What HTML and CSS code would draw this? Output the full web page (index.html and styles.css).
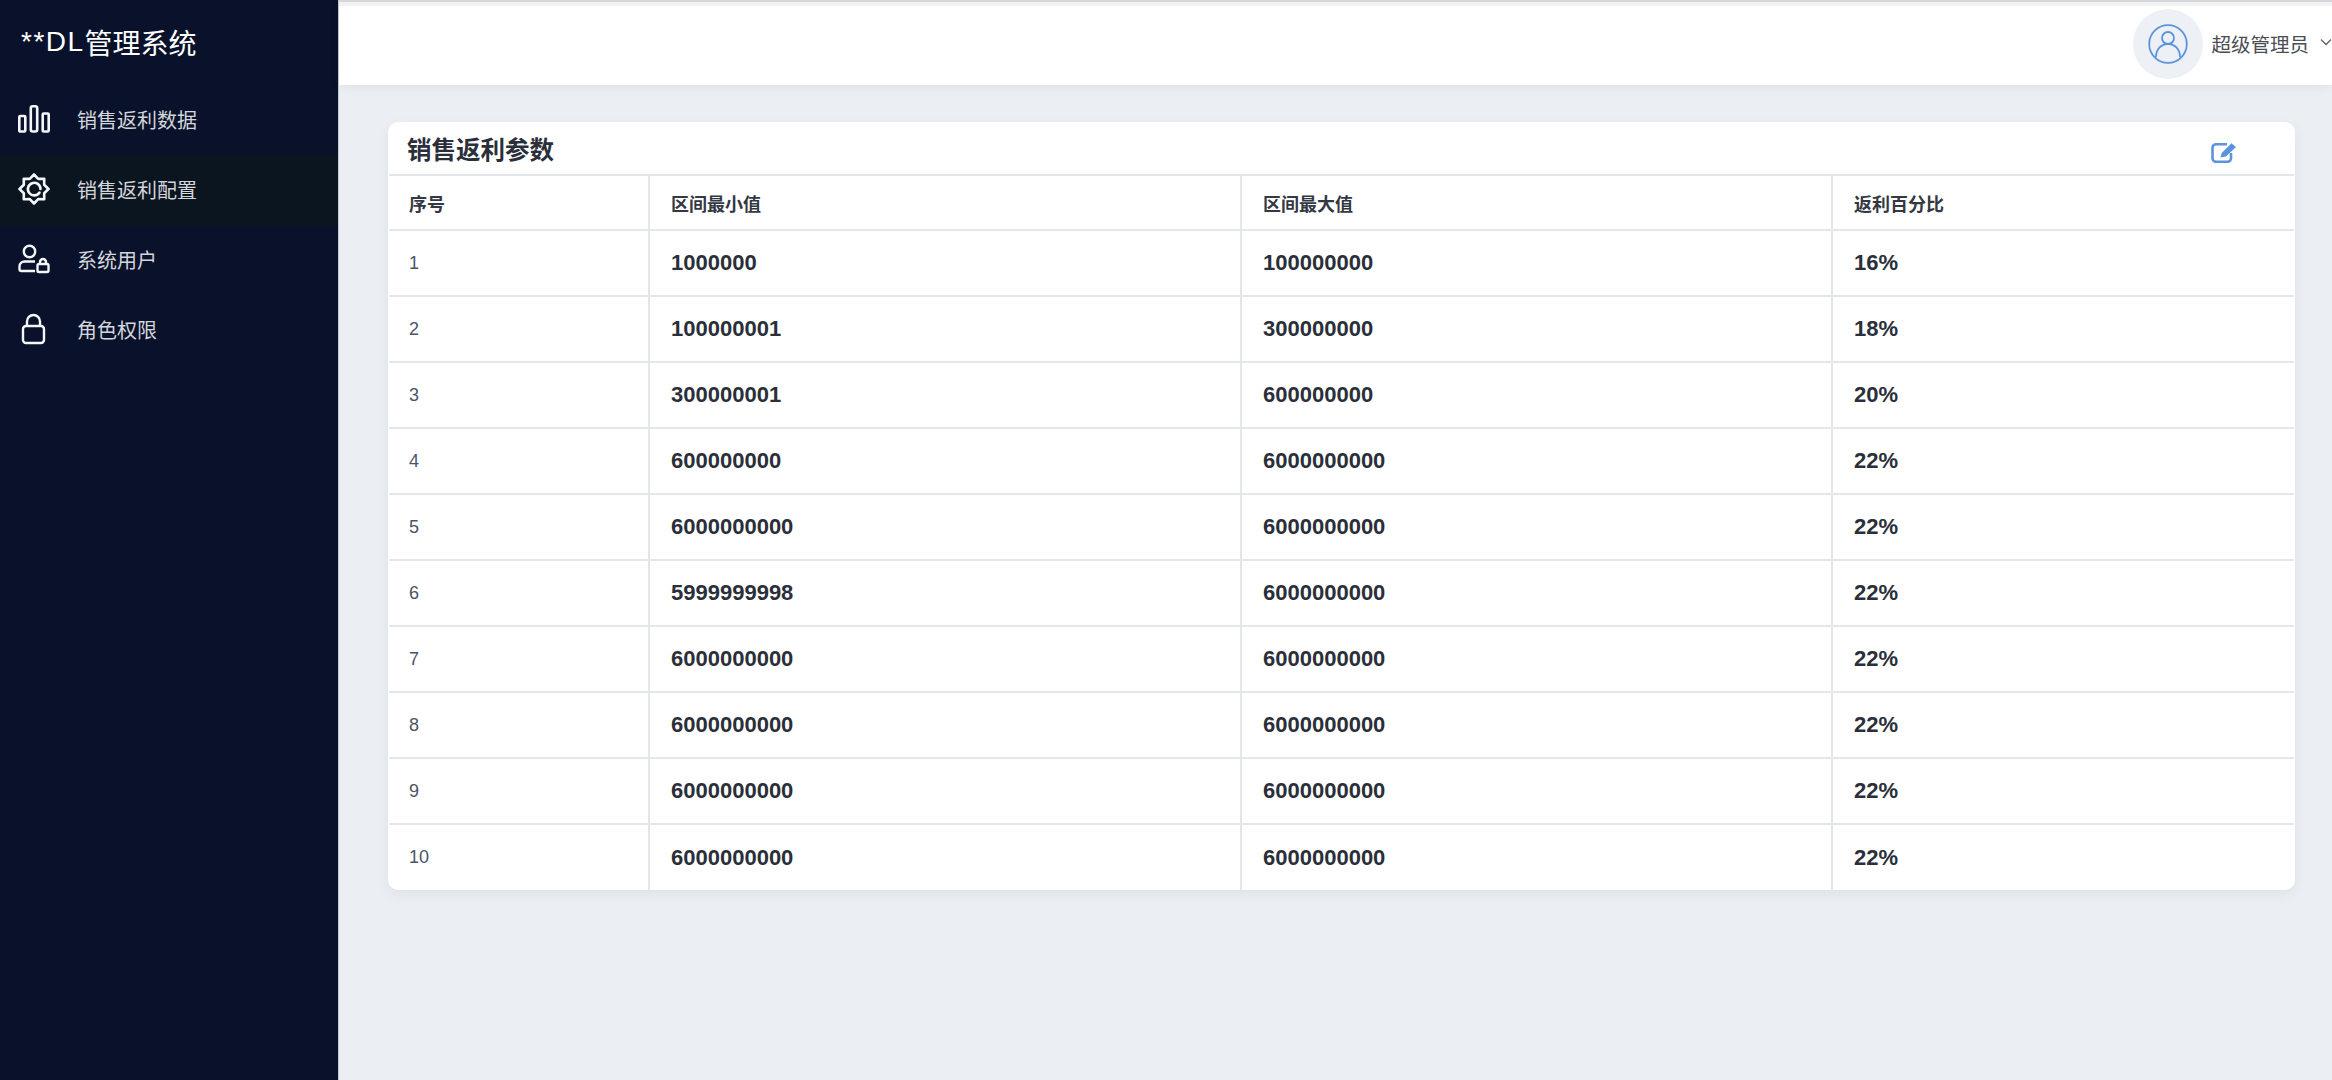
FILE: index.html
```html
<!DOCTYPE html>
<html lang="zh">
<head>
<meta charset="utf-8">
<title>**DL管理系统</title>
<link rel="stylesheet" href="styles.css">
</head>
<body>
<div class="app">
  <aside class="sidebar">
    <div class="logo"><span class="logo-mark">**DL</span>管理系统</div>
    <nav class="menu">
      <a class="menu-item">
        <svg class="menu-icon" viewBox="0 0 32 28" fill="none" stroke="currentColor" stroke-width="2.6"><rect x="1.300" y="11" width="6" height="15.500" rx="1"/><rect x="12.800" y="1.300" width="6.400" height="25.200" rx="2"/><rect x="24.700" y="8.500" width="6" height="18" rx="1"/></svg>
        <span>销售返利数据</span>
      </a>
      <a class="menu-item active">
        <svg class="menu-icon" viewBox="0 0 32 32" fill="none" stroke="currentColor" stroke-width="2.600" stroke-linejoin="round" stroke-linecap="round"><path d="M16 1.500L20.210 5.840 26.250 5.750 26.160 11.790 30.500 16 26.160 20.210 26.250 26.250 20.210 26.160 16 30.500 11.790 26.160 5.750 26.250 5.840 20.210 1.500 16 5.840 11.790 5.750 5.750 11.790 5.840z"/><path d="M21.500 19.500a6.300 6.300 0 1 1 1-3.500"/></svg>
        <span>销售返利配置</span>
      </a>
      <a class="menu-item">
        <svg class="menu-icon" viewBox="0 0 32 30" fill="none" stroke="currentColor" stroke-width="2.400"><circle cx="11.500" cy="7.500" r="5.700"/><path d="M17 17.500H6.500a5 5 0 0 0-5 5v2.500a2 2 0 0 0 2 2H17"/><rect x="19.500" y="20" width="11" height="8" rx="1.500"/><path d="M22 20v-2a3 3 0 0 1 6 0v2"/></svg>
        <span>系统用户</span>
      </a>
      <a class="menu-item">
        <svg class="menu-icon lock" viewBox="0 0 26 32" fill="none" stroke="currentColor" stroke-width="2.400"><rect x="2" y="13" width="21" height="17" rx="3"/><path d="M6 13V8.500a6.500 6.500 0 0 1 13 0V13"/></svg>
        <span>角色权限</span>
      </a>
    </nav>
  </aside>
  <div class="main">
    <header class="topbar">
      <div class="avatar">
        <svg viewBox="0 0 40 40" fill="none" stroke="#5b94dc" stroke-width="1.800"><circle cx="20" cy="20" r="18.800"/><circle cx="20" cy="14" r="6"/><path d="M8 33c0-7.500 5-13 12-13s12 5.500 12 13"/></svg>
      </div>
      <span class="username">超级管理员</span>
      <svg class="caret" viewBox="0 0 12 8" fill="none" stroke="#606266" stroke-width="1.300"><path d="M1 1.500l5 5 5-5"/></svg>
    </header>
    <main class="content">
      <section class="card">
        <div class="card-head">
          <h2>销售返利参数</h2>
          <svg class="edit" viewBox="0 0 26 21" fill="none"><path d="M16 2.200H5a3.500 3.500 0 0 0-3.500 3.500v10.600a3.500 3.500 0 0 0 3.500 3.500h11.500a3.500 3.500 0 0 0 3.500-3.500V11" stroke="#5b94dc" stroke-width="2.600"/><path d="M9.500 15.500l1.200-4.500L20.500 1.200 25 5 15 14.500z" fill="#5b94dc"/></svg>
        </div>
        <table class="grid">
          <colgroup><col class="c1"><col class="c2"><col class="c3"><col></colgroup>
          <thead><tr><th>序号</th><th>区间最小值</th><th>区间最大值</th><th>返利百分比</th></tr></thead>
          <tbody>
            <tr><td>1</td><td>1000000</td><td>100000000</td><td>16%</td></tr>
            <tr><td>2</td><td>100000001</td><td>300000000</td><td>18%</td></tr>
            <tr><td>3</td><td>300000001</td><td>600000000</td><td>20%</td></tr>
            <tr><td>4</td><td>600000000</td><td>6000000000</td><td>22%</td></tr>
            <tr><td>5</td><td>6000000000</td><td>6000000000</td><td>22%</td></tr>
            <tr><td>6</td><td>5999999998</td><td>6000000000</td><td>22%</td></tr>
            <tr><td>7</td><td>6000000000</td><td>6000000000</td><td>22%</td></tr>
            <tr><td>8</td><td>6000000000</td><td>6000000000</td><td>22%</td></tr>
            <tr><td>9</td><td>6000000000</td><td>6000000000</td><td>22%</td></tr>
            <tr><td>10</td><td>6000000000</td><td>6000000000</td><td>22%</td></tr>
          </tbody>
        </table>
      </section>
    </main>
  </div>
</div>
</body>
</html>
```

FILE: styles.css
```css
* { box-sizing: border-box; }
html, body { margin: 0; height: 100%; overflow: hidden; }
body { font-family: "Liberation Sans", "Noto Sans CJK SC", sans-serif; background: #ebeef2; color: #2a2f3a; }

.app { display: flex; height: 1080px; }

.sidebar { flex: 0 0 339px; background: #09122a; color: #fff; border-right: 1px solid #c4c7cc; }
.logo { height: 84px; padding-left: 21px; display: flex; align-items: center; font-size: 28px; color: #fff; }
.logo-mark { letter-spacing: 1.500px; }
.menu { display: flex; flex-direction: column; }
.menu-item { height: 70px; display: flex; align-items: center; padding-left: 18px; font-size: 20px; color: #d3d6dc; }
.menu-item.active { height: 72px; padding-bottom: 2px; margin-bottom: -2px; background: #0b1520; }
.menu-icon { width: 32px; height: 32px; flex: none; margin-right: 27px; color: #f4f6fa; }
.menu-icon.lock { padding: 0 3px; }

.main { flex: 1; min-width: 0; display: flex; flex-direction: column; }
.topbar { height: 85px; background: #fff; display: flex; align-items: center; justify-content: flex-end; border-top: 2px solid #d4d6d9; box-shadow: inset 0 4px 0 #f0f2f4, 0 2px 12px rgba(0,0,0,.06); }
.avatar { width: 70px; height: 70px; border-radius: 50%; background: #edf0f4; display: flex; align-items: center; justify-content: center; margin-right: 8px; }
.avatar svg { width: 40px; height: 40px; }
.username { font-size: 19.500px; color: #4a4d52; margin-right: 11px; }
.caret { width: 12px; height: 8px; margin-bottom: 4px; flex: none; }

.content { flex: 1; padding: 37px 37px 0 49px; }
.card { background: #fff; border-radius: 10px; box-shadow: 0 4px 14px rgba(0,0,0,.06); overflow: hidden; padding: 0 1px; }
.card-head { height: 52px; display: flex; align-items: center; justify-content: space-between; padding: 0 57px 0 18px; }
.card-head h2 { margin: 0; font-size: 24.500px; font-weight: 700; color: #2a2f3a; }
.edit { width: 26px; height: 21px; flex: none; margin-top: 8px; }

.grid { width: 100%; table-layout: fixed; border-collapse: collapse; }
.c1 { width: 260px; }
.c2 { width: 592px; }
.c3 { width: 591px; }
.grid th, .grid td { padding: 0 0 0 21px; text-align: left; border-top: 2px solid #e3e7ec; border-left: 2px solid #e3e7ec; }
.grid th:first-child, .grid td:first-child { border-left: 0; padding-left: 20px; }
.grid th { height: 55px; font-size: 18px; font-weight: 700; color: #333842; }
.grid td { height: 66px; font-size: 22px; font-weight: 700; color: #2a2f3a; }
.grid td:first-child { font-size: 18px; font-weight: 400; color: #4a5468; }
```
